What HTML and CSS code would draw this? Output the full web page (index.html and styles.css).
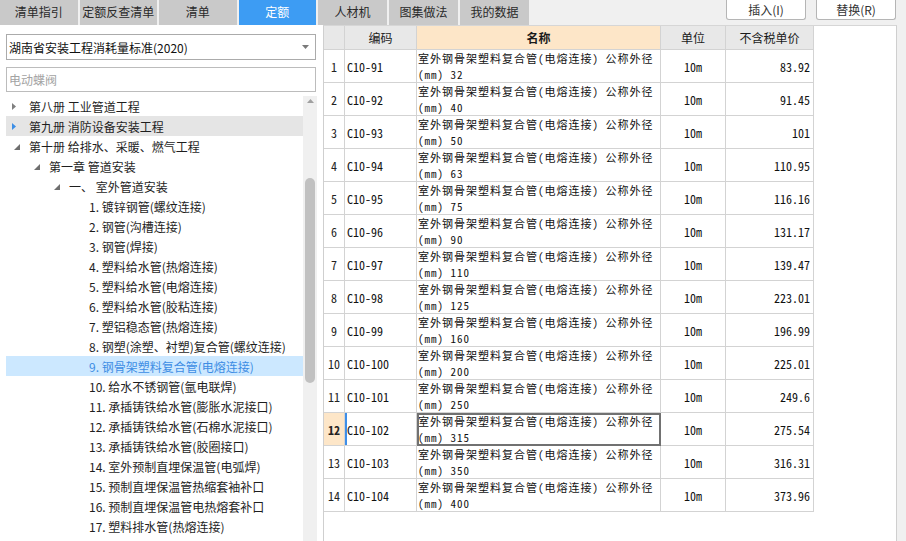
FILE: index.html
```html
<!DOCTYPE html>
<html lang="zh-CN">
<head>
<meta charset="utf-8">
<title>定额</title>
<link rel="stylesheet" href="styles.css">
</head>
<body>
<div class="app">
  <div class="topbar">
    <div class="tabs left-tabs">
      <div class="tab">清单指引</div>
      <div class="tab">定额反查清单</div>
      <div class="tab">清单</div>
      <div class="tab active">定额</div>
    </div>
    <div class="tabs right-tabs">
      <div class="tab">人材机</div>
      <div class="tab">图集做法</div>
      <div class="tab">我的数据</div>
    </div>
    <div class="actions">
      <button class="btn">插入(I)</button>
      <button class="btn">替换(R)</button>
    </div>
  </div>
  <div class="main">
    <aside class="left">
      <div class="select">
        <span>湖南省安装工程消耗量标准(2020)</span>
        <svg class="caret" width="7" height="4" viewBox="0 0 7 4"><path d="M0 0H7L3.5 4Z"/></svg>
      </div>
      <div class="search">电动蝶阀</div>
      <div class="tree">
        <div class="tree-list">
          <div class="node lv0"><span class="tw"><svg class="arr-r" width="4" height="7" viewBox="0 0 4 7"><path d="M0 0L4 3.5L0 7Z"/></svg></span><span class="label">第八册 工业管道工程</span></div>
          <div class="node lv0 hover"><span class="tw"><svg class="arr-r" width="4" height="7" viewBox="0 0 4 7"><path d="M0 0L4 3.5L0 7Z"/></svg></span><span class="label">第九册 消防设备安装工程</span></div>
          <div class="node lv0"><span class="tw"><svg class="arr-d" width="6" height="6" viewBox="0 0 6 6"><path d="M6 0V6H0Z"/></svg></span><span class="label">第十册 给排水、采暖、燃气工程</span></div>
          <div class="node lv1"><span class="tw"><svg class="arr-d" width="6" height="6" viewBox="0 0 6 6"><path d="M6 0V6H0Z"/></svg></span><span class="label">第一章 管道安装</span></div>
          <div class="node lv2"><span class="tw"><svg class="arr-d" width="6" height="6" viewBox="0 0 6 6"><path d="M6 0V6H0Z"/></svg></span><span class="label">一、 室外管道安装</span></div>
          <div class="node lv3"><span class="tw"></span><span class="label">1. 镀锌钢管(螺纹连接)</span></div>
          <div class="node lv3"><span class="tw"></span><span class="label">2. 钢管(沟槽连接)</span></div>
          <div class="node lv3"><span class="tw"></span><span class="label">3. 钢管(焊接)</span></div>
          <div class="node lv3"><span class="tw"></span><span class="label">4. 塑料给水管(热熔连接)</span></div>
          <div class="node lv3"><span class="tw"></span><span class="label">5. 塑料给水管(电熔连接)</span></div>
          <div class="node lv3"><span class="tw"></span><span class="label">6. 塑料给水管(胶粘连接)</span></div>
          <div class="node lv3"><span class="tw"></span><span class="label">7. 塑铝稳态管(热熔连接)</span></div>
          <div class="node lv3"><span class="tw"></span><span class="label">8. 钢塑(涂塑、衬塑)复合管(螺纹连接)</span></div>
          <div class="node lv3 selected"><span class="tw"></span><span class="label">9. 钢骨架塑料复合管(电熔连接)</span></div>
          <div class="node lv3"><span class="tw"></span><span class="label">10. 给水不锈钢管(氩电联焊)</span></div>
          <div class="node lv3"><span class="tw"></span><span class="label">11. 承插铸铁给水管(膨胀水泥接口)</span></div>
          <div class="node lv3"><span class="tw"></span><span class="label">12. 承插铸铁给水管(石棉水泥接口)</span></div>
          <div class="node lv3"><span class="tw"></span><span class="label">13. 承插铸铁给水管(胶圈接口)</span></div>
          <div class="node lv3"><span class="tw"></span><span class="label">14. 室外预制直埋保温管(电弧焊)</span></div>
          <div class="node lv3"><span class="tw"></span><span class="label">15. 预制直埋保温管热缩套袖补口</span></div>
          <div class="node lv3"><span class="tw"></span><span class="label">16. 预制直埋保温管电热熔套补口</span></div>
          <div class="node lv3"><span class="tw"></span><span class="label">17. 塑料排水管(热熔连接)</span></div>
        </div>
        <div class="scrollbar">
          <svg class="sb-up" width="7" height="4" viewBox="0 0 7 4"><path d="M0 4H7L3.5 0Z"/></svg>
          <div class="thumb"></div>
        </div>
      </div>
    </aside>
    <section class="grid-pane">
      <div class="grid">
        <div class="h"></div>
        <div class="h">编码</div>
        <div class="h hname">名称</div>
        <div class="h">单位</div>
        <div class="h">不含税单价</div>

        <div class="c num">1</div><div class="c code">C10-91</div><div class="c name">室外钢骨架塑料复合管(电熔连接) 公称外径<br>(mm) 32</div><div class="c unit">10m</div><div class="c price">83.92</div>
        <div class="c num">2</div><div class="c code">C10-92</div><div class="c name">室外钢骨架塑料复合管(电熔连接) 公称外径<br>(mm) 40</div><div class="c unit">10m</div><div class="c price">91.45</div>
        <div class="c num">3</div><div class="c code">C10-93</div><div class="c name">室外钢骨架塑料复合管(电熔连接) 公称外径<br>(mm) 50</div><div class="c unit">10m</div><div class="c price">101</div>
        <div class="c num">4</div><div class="c code">C10-94</div><div class="c name">室外钢骨架塑料复合管(电熔连接) 公称外径<br>(mm) 63</div><div class="c unit">10m</div><div class="c price">110.95</div>
        <div class="c num">5</div><div class="c code">C10-95</div><div class="c name">室外钢骨架塑料复合管(电熔连接) 公称外径<br>(mm) 75</div><div class="c unit">10m</div><div class="c price">116.16</div>
        <div class="c num">6</div><div class="c code">C10-96</div><div class="c name">室外钢骨架塑料复合管(电熔连接) 公称外径<br>(mm) 90</div><div class="c unit">10m</div><div class="c price">131.17</div>
        <div class="c num">7</div><div class="c code">C10-97</div><div class="c name">室外钢骨架塑料复合管(电熔连接) 公称外径<br>(mm) 110</div><div class="c unit">10m</div><div class="c price">139.47</div>
        <div class="c num">8</div><div class="c code">C10-98</div><div class="c name">室外钢骨架塑料复合管(电熔连接) 公称外径<br>(mm) 125</div><div class="c unit">10m</div><div class="c price">223.01</div>
        <div class="c num">9</div><div class="c code">C10-99</div><div class="c name">室外钢骨架塑料复合管(电熔连接) 公称外径<br>(mm) 160</div><div class="c unit">10m</div><div class="c price">196.99</div>
        <div class="c num">10</div><div class="c code">C10-100</div><div class="c name">室外钢骨架塑料复合管(电熔连接) 公称外径<br>(mm) 200</div><div class="c unit">10m</div><div class="c price">225.01</div>
        <div class="c num">11</div><div class="c code">C10-101</div><div class="c name">室外钢骨架塑料复合管(电熔连接) 公称外径<br>(mm) 250</div><div class="c unit">10m</div><div class="c price">249.6</div>
        <div class="c num sel">12</div><div class="c code sel">C10-102</div><div class="c name sel">室外钢骨架塑料复合管(电熔连接) 公称外径<br>(mm) 315</div><div class="c unit">10m</div><div class="c price">275.54</div>
        <div class="c num">13</div><div class="c code">C10-103</div><div class="c name">室外钢骨架塑料复合管(电熔连接) 公称外径<br>(mm) 350</div><div class="c unit">10m</div><div class="c price">316.31</div>
        <div class="c num">14</div><div class="c code">C10-104</div><div class="c name">室外钢骨架塑料复合管(电熔连接) 公称外径<br>(mm) 400</div><div class="c unit">10m</div><div class="c price">373.96</div>
      </div>
    </section>
  </div>
</div>
</body>
</html>
```
FILE: styles.css
```css
html, body {
  margin: 0;
  padding: 0;
}
body {
  background: #f0f0f0;
  font-family: "Noto Sans CJK SC", "Microsoft YaHei", sans-serif;
  font-size: 12px;
  color: #1b1b1b;
}
.app {
  width: 906px;
  height: 541px;
  overflow: hidden;
  display: flex;
  flex-direction: column;
}

/* top bar */
.topbar {
  height: 25px;
  flex: none;
  display: flex;
}
.tabs {
  display: flex;
  gap: 2px;
}
.left-tabs {
  width: 316px;
}
.left-tabs .tab {
  flex: 1;
}
.right-tabs {
  margin-left: 2px;
}
.right-tabs .tab {
  width: 69px;
}
.tab {
  height: 25px;
  line-height: 24px;
  text-align: center;
  background: #c9c9c9;
  color: #2a2a2a;
  font-size: 12px;
}
.tab.active {
  background: #3d9cf3;
  color: #fff;
}
.actions {
  margin-left: auto;
  margin-right: 10px;
  display: flex;
  gap: 10px;
}
.btn {
  width: 80px;
  height: 20px;
  padding: 0;
  border: 1px solid #b5b5b5;
  border-top: none;
  border-radius: 0 0 3px 3px;
  background: #fff;
  font-family: "Noto Sans CJK SC", sans-serif;
  font-size: 12px;
  line-height: 18px;
  color: #333;
}

/* main */
.main {
  flex: 1;
  display: flex;
  min-height: 0;
}
.left {
  width: 323px;
  flex: none;
  box-sizing: border-box;
  background: #fff;
  padding: 9px 0 0 6px;
  display: flex;
  flex-direction: column;
}
.select {
  width: 310px;
  height: 26px;
  box-sizing: border-box;
  border: 1px solid #ababab;
  display: flex;
  align-items: center;
  justify-content: space-between;
  padding: 0 6px 0 2px;
  color: #111;
  flex: none;
}
.caret {
  fill: #7a7a7a;
}
.search {
  margin-top: 7px;
  width: 310px;
  height: 25px;
  box-sizing: border-box;
  border: 1px solid #bcbcbc;
  padding: 0 2px;
  display: flex;
  align-items: center;
  color: #a3a3a3;
  flex: none;
}
.tree {
  margin-top: 4px;
  flex: 1;
  min-height: 0;
  width: 311px;
  display: flex;
}
.tree-list {
  width: 297px;
}
.node {
  height: 20px;
  display: flex;
  align-items: center;
  white-space: nowrap;
  color: #1e1e1e;
}
.node.lv1 { padding-left: 20px; }
.node.lv2 { padding-left: 40px; }
.node.lv3 { padding-left: 60px; }
.node.hover {
  background: #e5e5e5;
}
.node.selected {
  background: #cce8ff;
  color: #3d8de4;
}
.tw {
  width: 23px;
  height: 20px;
  flex: none;
  display: flex;
  align-items: center;
}
.arr-r {
  margin-left: 6px;
  fill: #808080;
}
.node.hover .arr-r {
  fill: #3c8ee6;
}
.arr-d {
  margin-left: 8px;
  margin-top: 2px;
  fill: #6e6e6e;
}
.scrollbar {
  width: 14px;
  background: #f0f0f0;
  display: flex;
  flex-direction: column;
  align-items: center;
}
.sb-up {
  margin-top: 3px;
  fill: #a0a0a0;
}
.thumb {
  margin-top: 75px;
  width: 10px;
  height: 205px;
  border-radius: 5px;
  background: #c1c1c1;
}

/* grid */
.grid-pane {
  width: 574px;
  flex: none;
  box-sizing: border-box;
  background: #fff;
  border-left: 1px solid #cfcfcf;
  border-right: 1px solid #cfcfcf;
  border-top: 1px solid #d6d6d6;
}
.grid {
  width: 490px;
  display: grid;
  grid-template-columns: 21px 72px 244px 65px 88px;
  grid-template-rows: 24px;
  grid-auto-rows: 33px;
}
.h, .c {
  box-sizing: border-box;
  border-right: 1px solid #d3d3d3;
  border-bottom: 1px solid #d3d3d3;
  display: flex;
  align-items: center;
  white-space: nowrap;
}
.h {
  background: #e8e8e8;
  justify-content: center;
  color: #1a1a1a;
}
.h.hname {
  background: #fde6c8;
  font-weight: bold;
}
.c {
  font-family: "Noto Sans Mono CJK SC", "Noto Sans CJK SC", monospace;
  font-size: 12px;
  color: #111;
}
.c.num {
  justify-content: center;
  color: #222;
}
.c.num.sel {
  background: #fde6c8;
  font-weight: bold;
}
.c.code {
  padding-left: 2px;
}
.c.code.sel {
  box-shadow: inset 2px 0 #3d8ee8;
}
.c.name {
  padding-left: 1px;
  font-size: 11px;
  letter-spacing: 1px;
  line-height: 16px;
}
.c.name.sel {
  outline: 2px solid #717171;
  outline-offset: -2px;
}
.c.unit {
  justify-content: center;
}
.c.price {
  justify-content: flex-end;
  padding-right: 3px;
}
```
